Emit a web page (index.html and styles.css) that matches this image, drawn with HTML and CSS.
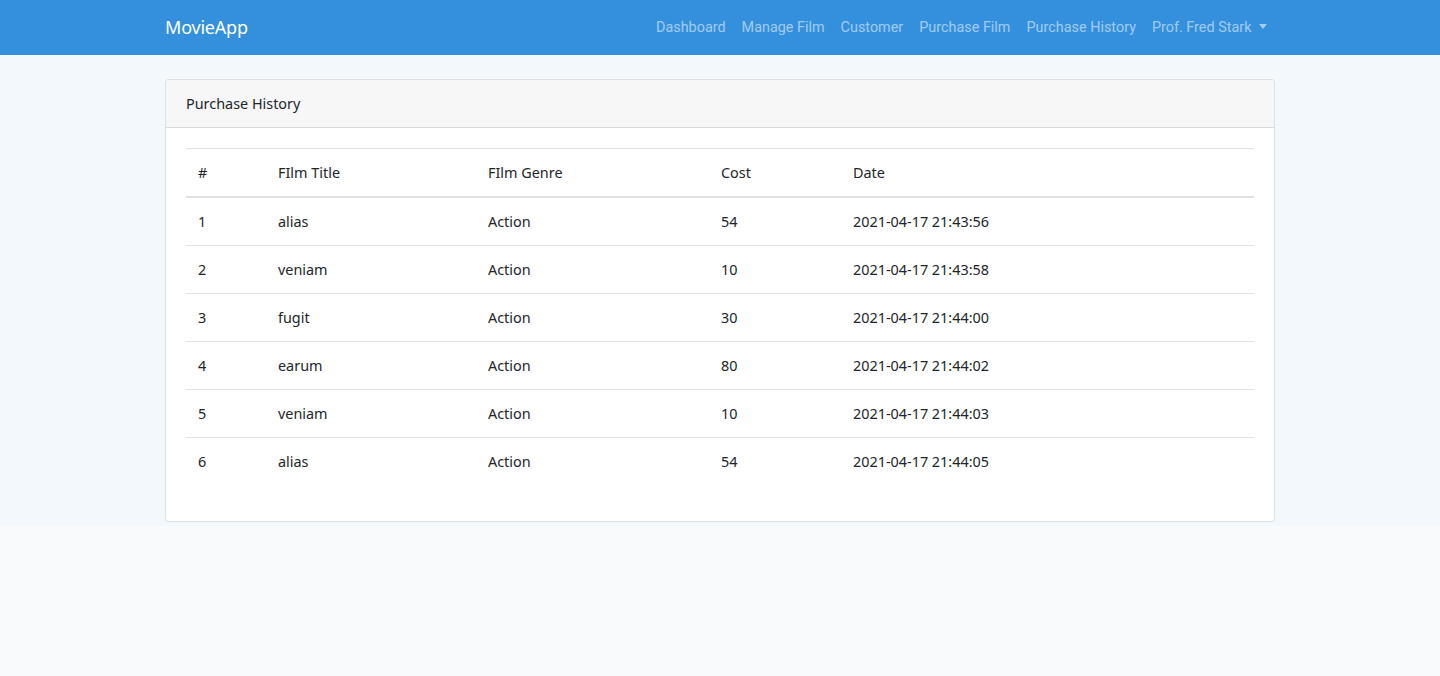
FILE: index.html
```html
<!DOCTYPE html>
<html lang="en">
<head>
<meta charset="utf-8">
<title>MovieApp</title>
<link rel="stylesheet" href="styles.css">
</head>
<body>
<nav class="navbar">
  <div class="container nav-inner">
    <a class="brand" href="#">MovieApp</a>
    <ul class="nav-links">
      <li><a href="#">Dashboard</a></li>
      <li><a href="#">Manage Film</a></li>
      <li><a href="#">Customer</a></li>
      <li><a href="#">Purchase Film</a></li>
      <li><a href="#">Purchase History</a></li>
      <li><a href="#" class="dropdown">Prof. Fred Stark <span class="caret"></span></a></li>
    </ul>
  </div>
</nav>
<main class="main">
  <div class="container">
    <div class="card">
      <div class="card-header">Purchase History</div>
      <div class="card-body">
        <table class="table">
          <thead>
            <tr><th class="c-num">#</th><th class="c-title">FIlm Title</th><th class="c-genre">FIlm Genre</th><th class="c-cost">Cost</th><th>Date</th></tr>
          </thead>
          <tbody>
            <tr><td>1</td><td>alias</td><td>Action</td><td>54</td><td>2021-04-17 21:43:56</td></tr>
            <tr><td>2</td><td>veniam</td><td>Action</td><td>10</td><td>2021-04-17 21:43:58</td></tr>
            <tr><td>3</td><td>fugit</td><td>Action</td><td>30</td><td>2021-04-17 21:44:00</td></tr>
            <tr><td>4</td><td>earum</td><td>Action</td><td>80</td><td>2021-04-17 21:44:02</td></tr>
            <tr><td>5</td><td>veniam</td><td>Action</td><td>10</td><td>2021-04-17 21:44:03</td></tr>
            <tr><td>6</td><td>alias</td><td>Action</td><td>54</td><td>2021-04-17 21:44:05</td></tr>
          </tbody>
        </table>
      </div>
    </div>
  </div>
</main>
</body>
</html>
```
FILE: styles.css
```css
* { box-sizing: border-box; }
html, body { margin: 0; padding: 0; }
body {
  background: #f8fafc;
  font-family: "Noto Sans", "Open Sans", sans-serif;
  font-size: 14.4px;
  line-height: 1.6;
  color: #212529;
}
.container {
  width: 1140px;
  margin: 0 auto;
  padding: 0 15px;
}
.navbar {
  background: #3490dc;
  height: 55px;
  box-shadow: 0 2px 4px rgba(0,0,0,.04);
}
.nav-inner {
  display: flex;
  align-items: center;
  justify-content: space-between;
  height: 55px;
}
.brand {
  color: #fff;
  text-decoration: none;
  font-size: 18px;
  font-family: "Noto Sans", sans-serif;
  letter-spacing: -0.2px;
}
.nav-links {
  list-style: none;
  display: flex;
  margin: 0;
  padding: 0;
}
.nav-links a {
  display: block;
  padding: 8px 8px;
  color: rgba(255,255,255,.55);
  text-decoration: none;
  font-family: Roboto, sans-serif;
  font-size: 14.4px;
}
.caret {
  display: inline-block;
  margin-left: 4px;
  vertical-align: 3px;
  border-top: 5px solid rgba(255,255,255,.55);
  border-left: 4.5px solid transparent;
  border-right: 4.5px solid transparent;
}
.main {
  background: #f3f8fc;
  padding: 24px 0 4px;
}
.card {
  background: #fff;
  border: 1px solid rgba(0,0,0,.125);
  border-radius: 4px;
}
.card-header {
  background: #f7f7f7;
  border-bottom: 1px solid rgba(0,0,0,.125);
  padding: 12px 20px;
  border-radius: 4px 4px 0 0;
}
.card-body {
  padding: 20px;
}
.table {
  width: 100%;
  border-collapse: collapse;
  margin-bottom: 16px;
}
.table th, .table td {
  text-align: left;
  font-weight: normal;
  padding: 12px;
  border-top: 1px solid #dee2e6;
  vertical-align: top;
}
.table thead th {
  border-bottom: 2px solid #dee2e6;
}
.c-num { width: 80px; }
.c-title { width: 210px; }
.c-genre { width: 233px; }
.c-cost { width: 132px; }
```
